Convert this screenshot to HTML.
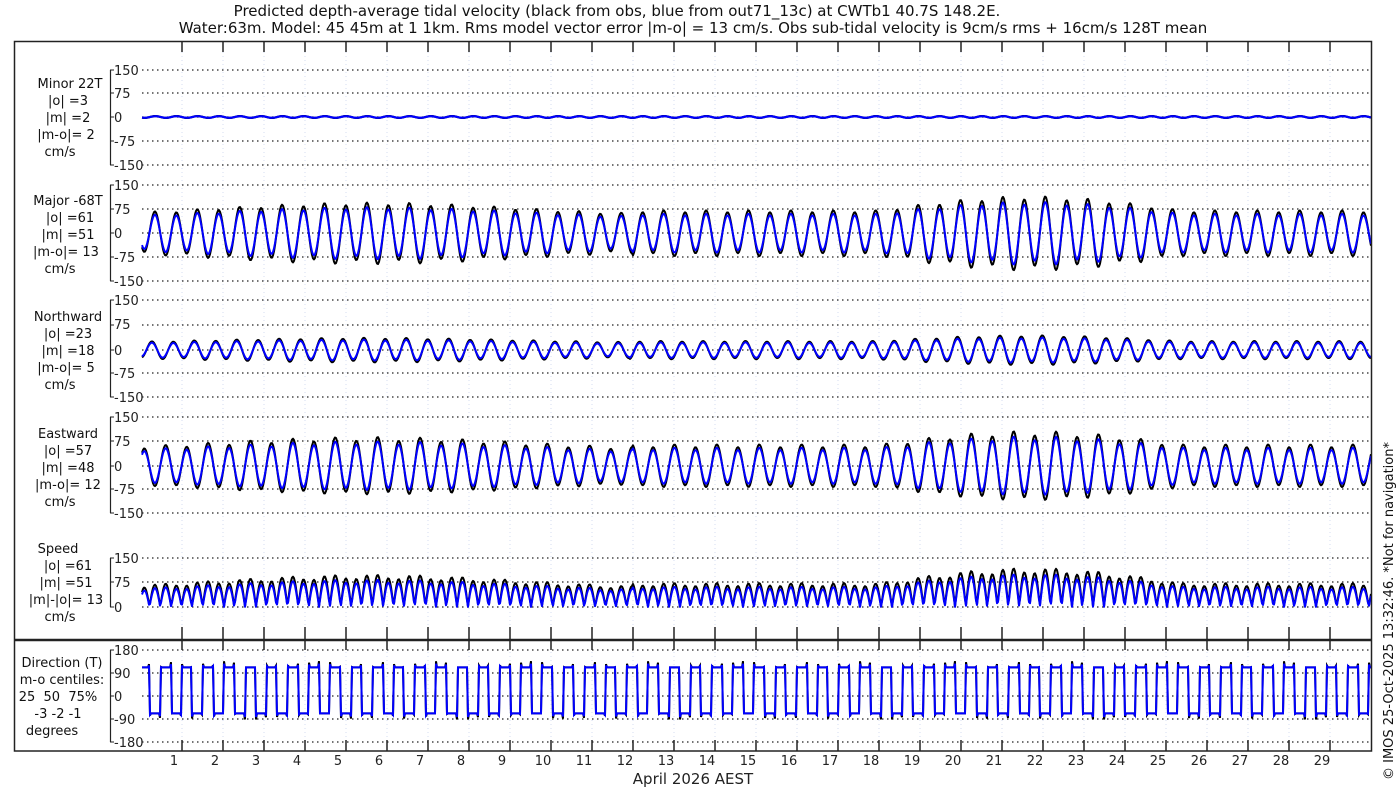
<!DOCTYPE html>
<html><head><meta charset="utf-8"><style>
html,body{margin:0;padding:0;background:#fff;}
svg{display:block;font-family:"DejaVu Sans","Liberation Sans",sans-serif;}
.t{font-size:13px;fill:#222}
.l{font-size:13px;fill:#111;text-anchor:middle}
</style></head><body>
<svg id="s" width="1400" height="800" viewBox="0 0 1400 800" xmlns="http://www.w3.org/2000/svg">
<rect width="1400" height="800" fill="#fff"/>
<g id="grid"></g>
<g id="data"></g>
<rect x="14.5" y="41.5" width="1357" height="709.5" fill="none" stroke="#222" stroke-width="1.5"/>
<line x1="14" y1="640" x2="1372" y2="640" stroke="#222" stroke-width="2.5"/>
<g id="axes"></g>
<text x="617" y="16" style="font-size:15px" text-anchor="middle" fill="#111">Predicted depth-average tidal velocity (black from obs, blue from out71_13c) at CWTb1 40.7S 148.2E.</text>
<text x="693" y="33" style="font-size:15px" text-anchor="middle" fill="#111">Water:63m. Model: 45 45m at 1 1km. Rms model vector error |m-o| = 13 cm/s. Obs sub-tidal velocity is 9cm/s rms + 16cm/s 128T mean</text>
<text x="693" y="784" style="font-size:15px" text-anchor="middle" fill="#222">April 2026 AEST</text>
<text transform="translate(1393,780) rotate(-90)" style="font-size:13px" fill="#111">© IMOS 25-Oct-2025 13:32:46. *Not for navigation*</text>
<g>
<text class="l" x="70" y="88">Minor 22T</text><text class="l" x="68" y="105">|o| =3</text><text class="l" x="68" y="122">|m| =2</text><text class="l" x="66" y="139">|m-o|= 2</text><text class="l" x="60" y="156">cm/s</text>
<text class="l" x="68" y="205">Major -68T</text><text class="l" x="70" y="222">|o| =61</text><text class="l" x="68" y="239">|m| =51</text><text class="l" x="66" y="256">|m-o|= 13</text><text class="l" x="60" y="273">cm/s</text>
<text class="l" x="68" y="321">Northward</text><text class="l" x="68" y="338">|o| =23</text><text class="l" x="68" y="355">|m| =18</text><text class="l" x="66" y="372">|m-o|= 5</text><text class="l" x="60" y="389">cm/s</text>
<text class="l" x="68" y="438">Eastward</text><text class="l" x="68" y="455">|o| =57</text><text class="l" x="68" y="472">|m| =48</text><text class="l" x="68" y="489">|m-o|= 12</text><text class="l" x="60" y="506">cm/s</text>
<text class="l" x="58" y="553">Speed</text><text class="l" x="68" y="570">|o| =61</text><text class="l" x="66" y="587">|m| =51</text><text class="l" x="66" y="604">|m|-|o|= 13</text><text class="l" x="60" y="621">cm/s</text>
<text class="l" x="62" y="667">Direction (T)</text><text class="l" x="62" y="684">m-o centiles:</text><text class="l" x="58" y="701" xml:space="preserve">25  50  75%</text><text class="l" x="58" y="718">-3 -2 -1</text><text class="l" x="52" y="735">degrees</text>
</g>
<g id="ticklabels">
<text class="t" x="114" y="75">150</text><text class="t" x="114" y="98">75</text><text class="t" x="114" y="122">0</text><text class="t" x="114" y="146">-75</text><text class="t" x="114" y="170">-150</text>
<text class="t" x="114" y="190">150</text><text class="t" x="114" y="214">75</text><text class="t" x="114" y="238">0</text><text class="t" x="114" y="262">-75</text><text class="t" x="114" y="286">-150</text>
<text class="t" x="114" y="305">150</text><text class="t" x="114" y="329">75</text><text class="t" x="114" y="355">0</text><text class="t" x="114" y="378">-75</text><text class="t" x="114" y="402">-150</text>
<text class="t" x="114" y="422">150</text><text class="t" x="114" y="446">75</text><text class="t" x="114" y="471">0</text><text class="t" x="114" y="494">-75</text><text class="t" x="114" y="518">-150</text>
<text class="t" x="114" y="563">150</text><text class="t" x="114" y="587">75</text><text class="t" x="114" y="612">0</text>
<text class="t" x="114" y="655">180</text><text class="t" x="114" y="678">90</text><text class="t" x="114" y="701">0</text><text class="t" x="114" y="724">-90</text><text class="t" x="114" y="747">-180</text>
</g>
<g id="days" class="t" text-anchor="middle">
<text x="174" y="765">1</text><text x="215" y="765">2</text><text x="256" y="765">3</text><text x="297" y="765">4</text><text x="338" y="765">5</text><text x="379" y="765">6</text><text x="420" y="765">7</text><text x="461" y="765">8</text><text x="502" y="765">9</text><text x="543" y="765">10</text><text x="584" y="765">11</text><text x="625" y="765">12</text><text x="666" y="765">13</text><text x="707" y="765">14</text><text x="748" y="765">15</text><text x="789" y="765">16</text><text x="830" y="765">17</text><text x="871" y="765">18</text><text x="912" y="765">19</text><text x="953" y="765">20</text><text x="994" y="765">21</text><text x="1035" y="765">22</text><text x="1076" y="765">23</text><text x="1117" y="765">24</text><text x="1158" y="765">25</text><text x="1199" y="765">26</text><text x="1240" y="765">27</text><text x="1281" y="765">28</text><text x="1322" y="765">29</text>
</g>
</svg>
<script>
(function(){
var NS="http://www.w3.org/2000/svg";
function el(p,n,a){var e=document.createElementNS(NS,n);for(var k in a)e.setAttribute(k,a[k]);p.appendChild(e);return e;}
var grid=document.getElementById('grid'),axes=document.getElementById('axes'),data=document.getElementById('data');
var X0=142,X1=1371;
for(var d=1;d<=29;d++){var x=182+41*(d-1);
 el(grid,'line',{x1:x,y1:52,x2:x,y2:740,stroke:'#d4def2','stroke-width':1,'stroke-dasharray':'1,3'});
 [[41,52],[627,640],[640,650],[740,751]].forEach(function(r){el(axes,'line',{x1:x,y1:r[0],x2:x,y2:r[1],stroke:'#222','stroke-width':1.5});});
}
var hl=[[70,93,117,141,165],[185,209,233,257,281],[300,325,350,373,397],[417,441,466,489,513],[558,582,607],[650,673,696,719,742]];
hl.forEach(function(p){
 p.forEach(function(y){el(grid,'line',{x1:X0,y1:y,x2:X1,y2:y,stroke:'#222','stroke-width':1.2,'stroke-dasharray':'1.5,3.5'});
 el(axes,'line',{x1:110,y1:y,x2:114,y2:y,stroke:'#222','stroke-width':1});});
 el(axes,'line',{x1:110.5,y1:p[0],x2:110.5,y2:p[p.length-1],stroke:'#222','stroke-width':1.2});
});
function amp(t){
 if(t<12) return 64+14*Math.cos(2*Math.PI*(t-5.6)/14.77);
 return 58+36*Math.max(0,Math.cos(2*Math.PI*(t-21.7)/14.77));
}
function maj(x,k){var t=(x-141)/41;var ph=2*Math.PI*(x-155)/21.2;var A=amp(t)*k;return A*Math.cos(ph)+A*0.08*Math.cos(ph/2+1.0);}
function path(f,col,w){var s='';for(var x=X0;x<=X1;x+=1){var y=f(x);s+=(x==X0?'M':'L')+x+' '+y.toFixed(1);}el(data,'path',{d:s,fill:'none',stroke:col,'stroke-width':w,'stroke-linejoin':'round'});}
var sc=47.5/150;
[[1.18,'#000'],[1.0,'#00f']].forEach(function(c){var k=c[0],col=c[1];
 path(function(x){return 117-sc*(k>1?3:2.5)*Math.sin(2*Math.PI*(x-150)/21.2);},col,2.2);
 path(function(x){return 233-sc*maj(x,k);},col,2);
 path(function(x){return 350-sc*0.4*maj(x+3,k);},col,2);
 path(function(x){return 466+sc*0.93*maj(x,k);},col,2);
 path(function(x){return 607-(49/150)*Math.abs(maj(x,k));},col,2);
});
[['#000'],['#00f']].forEach(function(c){var s='',col=c[0];
 for(var x=X0;x<=X1;x+=1){var v=maj(x,1);var dir=v>0?-68:112;var frac=Math.abs(v)/amp((x-141)/41);
 if(frac<0.25)dir=dir+(v>0?-1:1)*(col=='#000'?25:15)*(0.25-frac)*4;
 var y=696-dir*(23/90);s+=(x==X0?'M':'L')+x+' '+y.toFixed(1);}
 el(data,'path',{d:s,fill:'none',stroke:col,'stroke-width':2});
});
})();
</script>
</body></html>
